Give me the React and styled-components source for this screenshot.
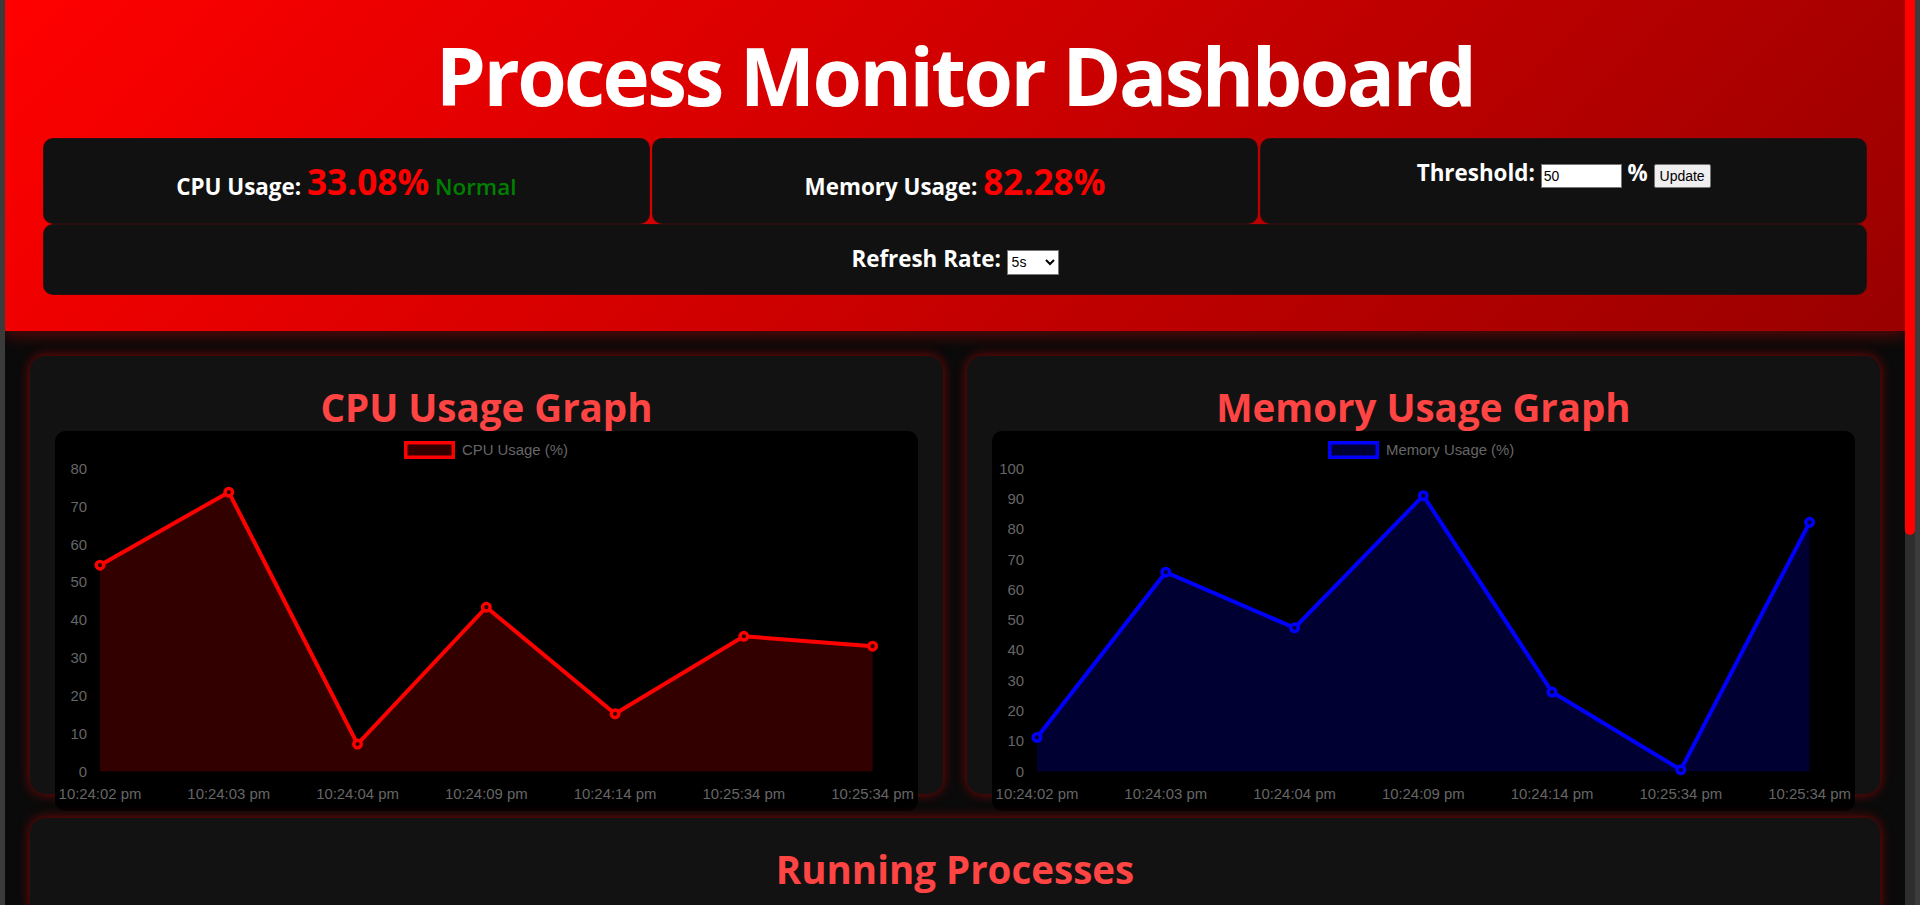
import React from "react";
import styled, { createGlobalStyle } from "styled-components";

const GlobalStyle = createGlobalStyle`
  html, body {
    margin: 0;
    height: 100%;
    overflow: hidden;
    background: #3b3b3b;
  }
  #root {
    height: 100%;
  }
`;

const labels = [
    "10:24:02 pm",
    "10:24:03 pm",
    "10:24:04 pm",
    "10:24:09 pm",
    "10:24:14 pm",
    "10:25:34 pm",
    "10:25:34 pm",
];

const cpuData = [54.5, 73.8, 7.2, 43.4, 15.2, 35.7, 33.08];
const memData = [11.2, 65.8, 47.4, 91.1, 26.2, 0.5, 82.28];

// chart geometry (px inside the black chart box)
const W = 863;
const H = 380;
const LEFT = 45;
const RIGHT = 817.6;
const TOP = 37.7;
const BOTTOM = 340.3;

const LineChart = ({ values, max, color, fill, legend, legendX }) => {
    const xs = values.map((_, i) => LEFT + ((RIGHT - LEFT) * i) / (values.length - 1));
    const ys = values.map((v) => BOTTOM - ((BOTTOM - TOP) * v) / max);
    const ticks = [];
    for (let t = 0; t <= max; t += 10) ticks.push(t);
    const line = xs.map((x, i) => `${x},${ys[i]}`).join(" ");
    const area = `${LEFT},${BOTTOM} ${line} ${RIGHT},${BOTTOM}`;

    return (
        <ChartSvg viewBox={`0 0 ${W} ${H}`}>
            <rect x={legendX + 1.75} y={11.75} width={47.5} height={14.5} fill={fill} stroke={color} strokeWidth={3.5} />
            <text x={legendX + 58} y={19} dy="0.35em">{legend}</text>

            {ticks.map((t) => (
                <text key={t} x={32} y={BOTTOM - ((BOTTOM - TOP) * t) / max} dy="0.35em" textAnchor="end">
                    {t}
                </text>
            ))}

            <polygon points={area} fill={fill} />
            <polyline points={line} fill="none" stroke={color} strokeWidth={4} />
            {xs.map((x, i) => (
                <circle key={i} cx={x} cy={ys[i]} r={3.8} fill={fill} stroke={color} strokeWidth={3.4} />
            ))}

            {labels.map((l, i) => (
                <text key={i} x={xs[i]} y={362.7} dy="0.35em" textAnchor="middle">
                    {l}
                </text>
            ))}
        </ChartSvg>
    );
};

const App = () => {
    return (
        <>
            <GlobalStyle />
            <Frame>
                <Scroller>
                    <Header>
                        <Title>Process Monitor Dashboard</Title>
                        <Stats>
                            <StatCard>
                                CPU Usage: <Big>33.08%</Big> <Status>Normal</Status>
                            </StatCard>
                            <StatCard>
                                Memory Usage: <Big>82.28%</Big>
                            </StatCard>
                            <StatCard>
                                Threshold: <ThresholdInput type="text" defaultValue="50" /> %{" "}
                                <UpdateButton>Update</UpdateButton>
                            </StatCard>
                            <StatCard $wide>
                                Refresh Rate:{" "}
                                <RateSelect defaultValue="5">
                                    <option value="1">1s</option>
                                    <option value="2">2s</option>
                                    <option value="5">5s</option>
                                    <option value="10">10s</option>
                                </RateSelect>
                            </StatCard>
                        </Stats>
                    </Header>

                    <Main>
                        <Panel $graph>
                            <PanelTitle>CPU Usage Graph</PanelTitle>
                            <ChartBox>
                                <LineChart
                                    values={cpuData}
                                    max={80}
                                    color="#ff0000"
                                    fill="#330000"
                                    legend="CPU Usage (%)"
                                    legendX={349}
                                />
                            </ChartBox>
                        </Panel>
                        <Panel $graph>
                            <PanelTitle>Memory Usage Graph</PanelTitle>
                            <ChartBox>
                                <LineChart
                                    values={memData}
                                    max={100}
                                    color="#0000ff"
                                    fill="#000033"
                                    legend="Memory Usage (%)"
                                    legendX={336}
                                />
                            </ChartBox>
                        </Panel>
                        <Panel $wide>
                            <PanelTitle>Running Processes</PanelTitle>
                        </Panel>
                    </Main>
                </Scroller>
                <ScrollTrack>
                    <ScrollThumb />
                </ScrollTrack>
            </Frame>
        </>
    );
};

const Frame = styled.div`
    height: 100vh;
    padding: 0 5px;
    box-sizing: border-box;
    background: #3b3b3b;
    display: flex;
`;

const Scroller = styled.div`
    flex: 1;
    min-width: 0;
    overflow: hidden;
    background: #0a0a0a;
    font-family: "Open Sans", "Noto Sans", sans-serif;
    color: #fff;
`;

const ScrollTrack = styled.div`
    width: 10px;
    flex: none;
    background: #2e2e2e;
`;

const ScrollThumb = styled.div`
    height: 535px;
    background: #ff0000;
    border-radius: 0 0 5px 5px;
`;

const Header = styled.header`
    background: linear-gradient(135deg, #ff0000, #990000);
    padding: 20px 38px 36px;
    box-shadow: 0 4px 15px rgba(255, 0, 0, 0.35);
`;

const Title = styled.h1`
    margin: 0 0 9px;
    font-size: 80px;
    line-height: 109px;
    letter-spacing: -2.6px;
    font-weight: 700;
    text-align: center;
    color: #fff;
`;

const Stats = styled.div`
    display: flex;
    flex-wrap: wrap;
    column-gap: 2px;
`;

const StatCard = styled.div`
    flex: 1 1 30%;
    box-sizing: border-box;
    min-height: ${(p) => (p.$wide ? "71px" : "0")};
    background: #111;
    border: 1px solid rgba(255, 0, 0, 0.1);
    border-radius: 10px;
    padding: 18px 20px;
    text-align: center;
    font-size: 22.4px;
    font-weight: 700;
    color: #fff;
`;

const Big = styled.span`
    font-size: 35.2px;
    color: #ff0000;
`;

const Status = styled.span`
    color: #008000;
    font-weight: 600;
`;

const ThresholdInput = styled.input`
    width: 81px;
    height: 24px;
    box-sizing: border-box;
    border: 1px solid #767676;
    padding: 1px 2px;
    font: 14px "Liberation Sans", Arial, sans-serif;
    color: #000;
    background: #fff;
`;

const UpdateButton = styled.button`
    height: 24px;
    box-sizing: border-box;
    padding: 1px 5px;
    border: 1px solid #767676;
    border-radius: 2px;
    background: #efefef;
    font: 14px "Liberation Sans", Arial, sans-serif;
    color: #000;
`;

const RateSelect = styled.select`
    width: 52px;
    height: 25px;
    box-sizing: border-box;
    border: 1px solid #767676;
    border-radius: 0;
    background: #fff;
    font: 14px "Liberation Sans", Arial, sans-serif;
    color: #000;
`;

const Main = styled.main`
    display: grid;
    grid-template-columns: 1fr 1fr;
    gap: 24px;
    padding: 25px;
`;

const Panel = styled.section`
    box-sizing: border-box;
    background: #121212;
    border-radius: 15px;
    padding: 25px;
    box-shadow: 0 0 12px rgba(255, 0, 0, 0.5);
    height: ${(p) => (p.$graph ? "438px" : "auto")};
    grid-column: ${(p) => (p.$wide ? "1 / -1" : "auto")};
`;

const PanelTitle = styled.h2`
    margin: 0;
    padding-top: 3px;
    font-size: 38.5px;
    line-height: 47px;
    font-weight: 700;
    text-align: center;
    color: #ff4444;
`;

const ChartBox = styled.div`
    height: 380px;
    background: #000;
    border-radius: 10px;
`;

const ChartSvg = styled.svg`
    display: block;
    width: 100%;
    height: 100%;

    text {
        font-family: "Liberation Sans", Arial, sans-serif;
        font-size: 14.9px;
        fill: #666;
    }
`;

export default App;
